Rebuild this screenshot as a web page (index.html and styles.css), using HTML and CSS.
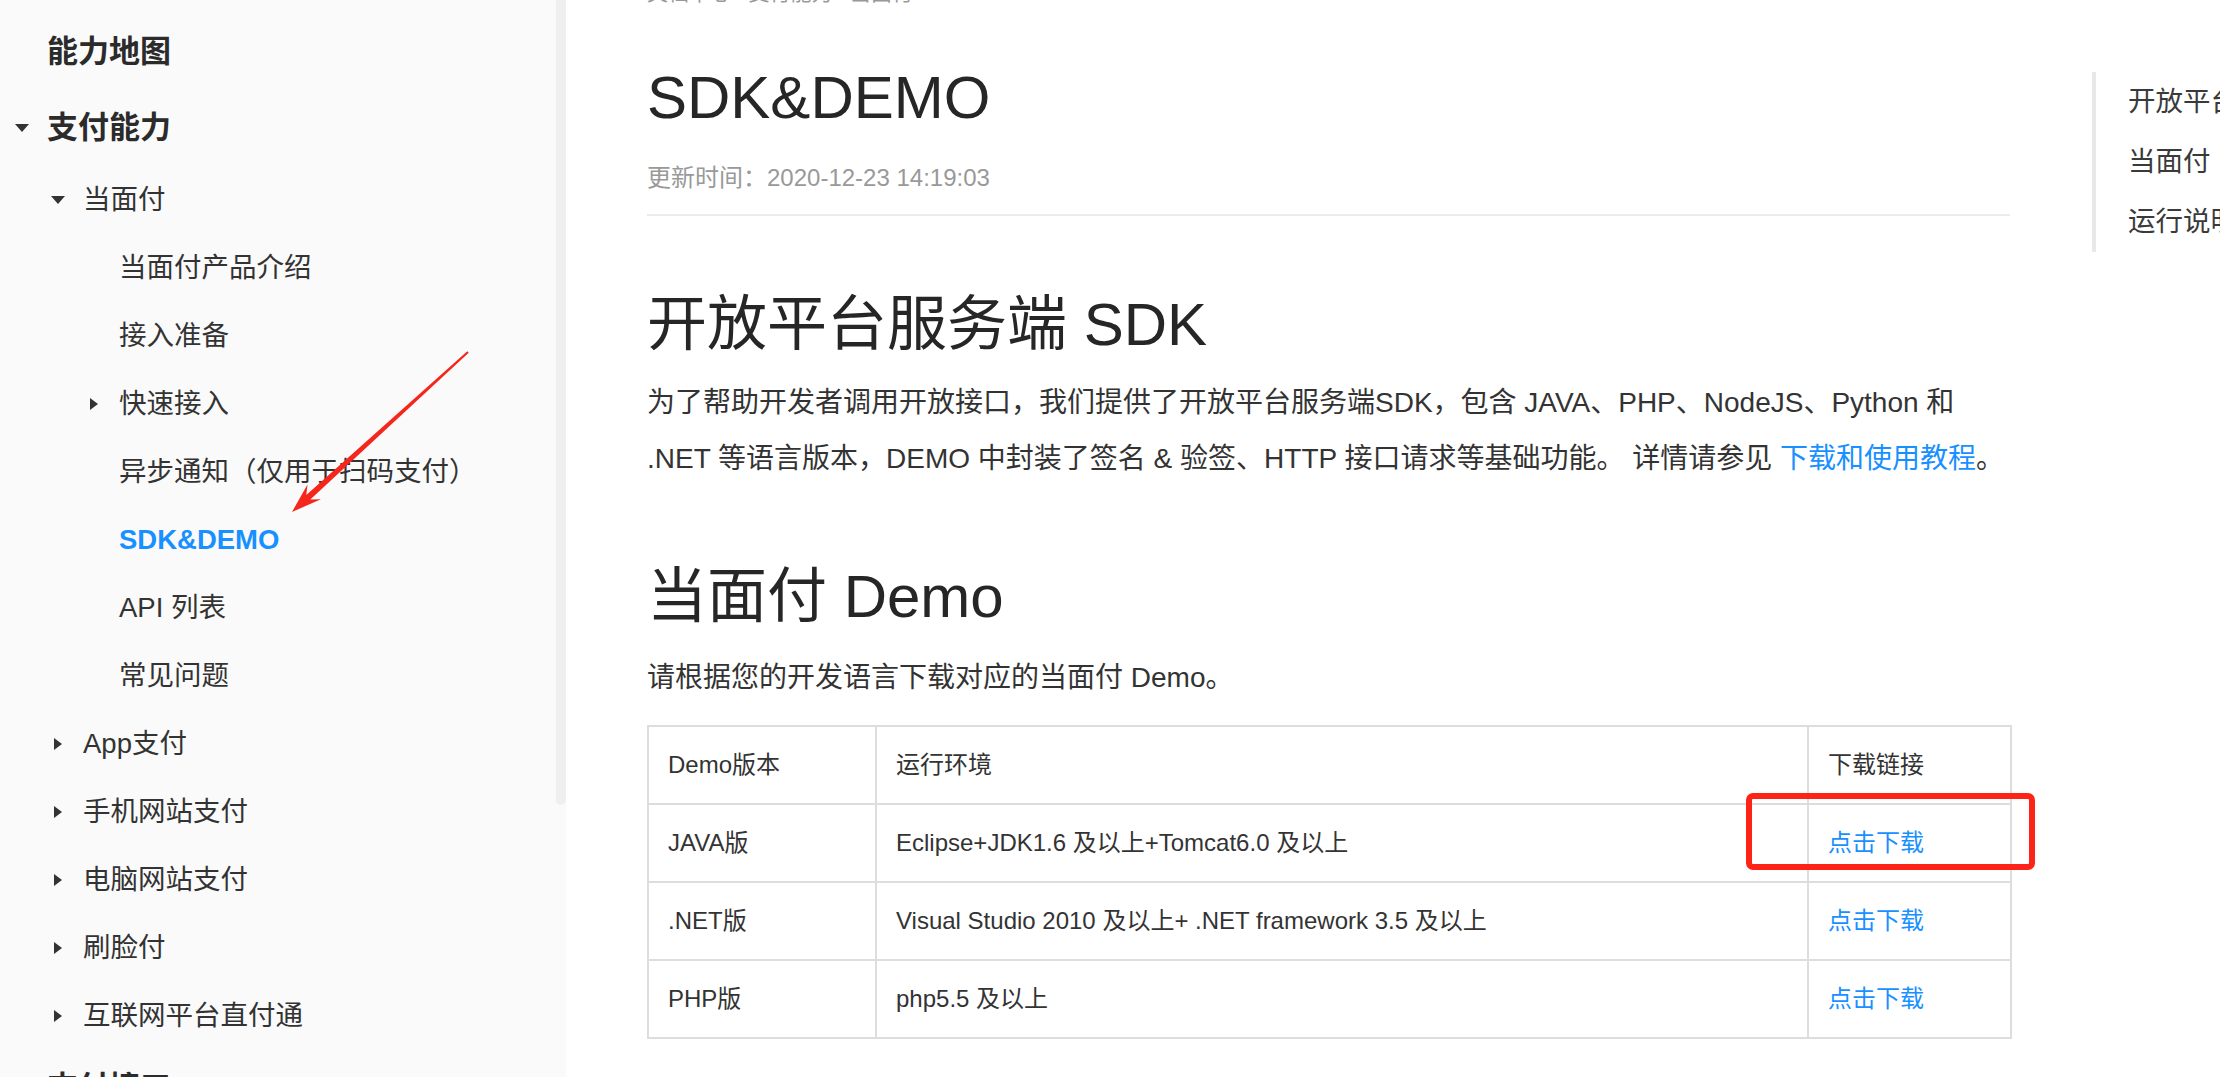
FILE: index.html
```html
<!DOCTYPE html>
<html lang="zh-CN">
<head>
<meta charset="utf-8">
<title>SDK&amp;DEMO</title>
<link rel="stylesheet" href="styles.css">
</head>
<body>
<div class="page">
  <aside class="sidebar">
    <nav class="nav">
      <div class="item l1 bold"><span class="caret-box"></span>能力地图</div>
      <div class="item l1 bold"><span class="caret-box"><span class="caret down"></span></span>支付能力</div>
      <div class="item l2"><span class="caret-box"><span class="caret down"></span></span>当面付</div>
      <div class="item l3"><span class="caret-box"></span>当面付产品介绍</div>
      <div class="item l3"><span class="caret-box"></span>接入准备</div>
      <div class="item l3"><span class="caret-box"><span class="caret right"></span></span>快速接入</div>
      <div class="item l3"><span class="caret-box"></span>异步通知（仅用于扫码支付）</div>
      <div class="item l3 active"><span class="caret-box"></span>SDK&amp;DEMO</div>
      <div class="item l3"><span class="caret-box"></span>API 列表</div>
      <div class="item l3"><span class="caret-box"></span>常见问题</div>
      <div class="item l2"><span class="caret-box"><span class="caret right"></span></span>App支付</div>
      <div class="item l2"><span class="caret-box"><span class="caret right"></span></span>手机网站支付</div>
      <div class="item l2"><span class="caret-box"><span class="caret right"></span></span>电脑网站支付</div>
      <div class="item l2"><span class="caret-box"><span class="caret right"></span></span>刷脸付</div>
      <div class="item l2"><span class="caret-box"><span class="caret right"></span></span>互联网平台直付通</div>
      <div class="item l1 bold"><span class="caret-box"></span>支付接口</div>
    </nav>
    <div class="gutter"><div class="thumb"></div></div>
  </aside>

  <main class="main">
    <div class="crumb">文档中心 / 支付能力 / 当面付</div>
    <h1 class="title">SDK&amp;DEMO</h1>
    <div class="meta">更新时间：2020-12-23 14:19:03</div>
    <hr class="rule">
    <h2 class="h2 h2-first">开放平台服务端 SDK</h2>
    <p class="para">为了帮助开发者调用开放接口，我们提供了开放平台服务端SDK，包含 JAVA、PHP、NodeJS、Python 和<br>.NET 等语言版本，DEMO 中封装了签名 &amp; 验签、HTTP 接口请求等基础功能。 详情请参见 <a class="link">下载和使用教程</a>。</p>
    <h2 class="h2 h2-second">当面付 Demo</h2>
    <p class="para para-short">请根据您的开发语言下载对应的当面付 Demo。</p>
    <table class="demo-table">
      <colgroup><col class="col-ver"><col class="col-env"><col class="col-dl"></colgroup>
      <thead>
        <tr><th>Demo版本</th><th>运行环境</th><th>下载链接</th></tr>
      </thead>
      <tbody>
        <tr><td>JAVA版</td><td>Eclipse+JDK1.6 及以上+Tomcat6.0 及以上</td><td><a class="link">点击下载</a></td></tr>
        <tr><td>.NET版</td><td>Visual Studio 2010 及以上+ .NET framework 3.5 及以上</td><td><a class="link">点击下载</a></td></tr>
        <tr><td>PHP版</td><td>php5.5 及以上</td><td><a class="link">点击下载</a></td></tr>
      </tbody>
    </table>
  </main>

  <aside class="toc">
    <div class="toc-item">开放平台服务端 SDK</div>
    <div class="toc-item">当面付 Demo</div>
    <div class="toc-item">运行说明</div>
  </aside>
</div>

<div class="mark-box"></div>
<svg class="mark-arrow" viewBox="280 340 200 180" width="200" height="180" xmlns="http://www.w3.org/2000/svg">
  <polygon points="468.7,352.7 310.3,499.4 320.9,499.2 292,512 307.5,484.4 306.3,495.0 467.3,351.3" fill="#f5261b"/>
</svg>
</body>
</html>
```

FILE: styles.css
```css
html, body {
  margin: 0;
  padding: 0;
  width: 2220px;
  height: 1077px;
  overflow: hidden;
  background: #ffffff;
}

body {
  position: relative;
  font-family: "Liberation Sans", "Noto Sans CJK SC", sans-serif;
  color: #333333;
}

.page {
  display: flex;
  align-items: flex-start;
  width: 2220px;
  height: 1077px;
}

/* ---------- sidebar ---------- */
.sidebar {
  flex: none;
  display: flex;
  width: 566px;
  height: 1077px;
  background: #fafafa;
  overflow: hidden;
}

.nav {
  flex: none;
  width: 556px;
  padding-top: 14px;
}

.gutter {
  flex: none;
  width: 10px;
}

.thumb {
  height: 805px;
  background: #efefef;
  border-radius: 0 0 5px 5px;
}

.item {
  display: flex;
  align-items: center;
  height: 68px;
  line-height: 68px;
  font-size: 27.5px;
  color: #333333;
  white-space: nowrap;
}

.item.l1 {
  height: 76px;
  line-height: 76px;
  padding-left: 11px;
}

.item.l2 { padding-left: 47px; }
.item.l3 { padding-left: 83px; }

.item.bold {
  font-size: 31px;
  font-weight: 700;
  color: #2b2b2b;
}

.item.active {
  color: #1890ff;
  font-weight: 700;
}

.caret-box {
  flex: none;
  width: 36px;
  height: 20px;
  padding-right: 14px;
  box-sizing: border-box;
  display: flex;
  align-items: center;
  justify-content: center;
}

.caret {
  display: block;
  width: 0;
  height: 0;
}

.caret.down {
  border-left: 7px solid transparent;
  border-right: 7px solid transparent;
  border-top: 8px solid #333333;
}

.caret.right {
  border-top: 6.5px solid transparent;
  border-bottom: 6.5px solid transparent;
  border-left: 8px solid #333333;
}

/* ---------- main ---------- */
.main {
  flex: none;
  width: 1363px;
  padding-left: 81px;
}

.crumb {
  margin-top: -22px;
  height: 30px;
  line-height: 30px;
  font-size: 21px;
  color: #999999;
  white-space: nowrap;
}

.title {
  margin: 54px 0 0;
  height: 72px;
  line-height: 72px;
  font-size: 60px;
  font-weight: 400;
  color: #262626;
}

.meta {
  margin-top: 26px;
  height: 36px;
  line-height: 36px;
  font-size: 24px;
  color: #999999;
}

.rule {
  margin: 18px 0 0;
  height: 0;
  border: 0;
  border-top: 2px solid #ebebeb;
}

.h2 {
  margin: 0;
  height: 72px;
  line-height: 72px;
  font-size: 60px;
  font-weight: 400;
  color: #262626;
  white-space: nowrap;
}

.h2-first { margin-top: 73px; }
.h2-second { margin-top: 74px; }

.para {
  margin: 14px 0 0;
  font-size: 28px;
  line-height: 56px;
  color: #333333;
  white-space: nowrap;
}

.para-short { margin-top: 17px; }

.link {
  color: #1890ff;
  text-decoration: none;
}

.demo-table {
  margin-top: 19px;
  width: 1363px;
  table-layout: fixed;
  border-collapse: collapse;
  font-size: 24px;
  color: #333333;
}

.col-ver { width: 228px; }
.col-env { width: 932px; }
.col-dl { width: 203px; }

.demo-table th,
.demo-table td {
  height: 76px;
  padding: 0 19px;
  border: 2px solid #dddddd;
  text-align: left;
  font-weight: 400;
  line-height: 36px;
  white-space: nowrap;
}

/* ---------- toc ---------- */
.toc {
  flex: none;
  margin-left: 82px;
  margin-top: 72px;
  border-left: 4px solid #e8e8e8;
  padding-left: 32px;
  font-size: 27.5px;
  line-height: 60px;
  color: #3a3a3a;
  white-space: nowrap;
}

/* ---------- annotations ---------- */
.mark-box {
  position: absolute;
  left: 1746px;
  top: 793px;
  width: 289px;
  height: 77px;
  box-sizing: border-box;
  border: 6px solid #fd2317;
  border-radius: 7px;
}

.mark-arrow {
  position: absolute;
  left: 280px;
  top: 340px;
}
```
